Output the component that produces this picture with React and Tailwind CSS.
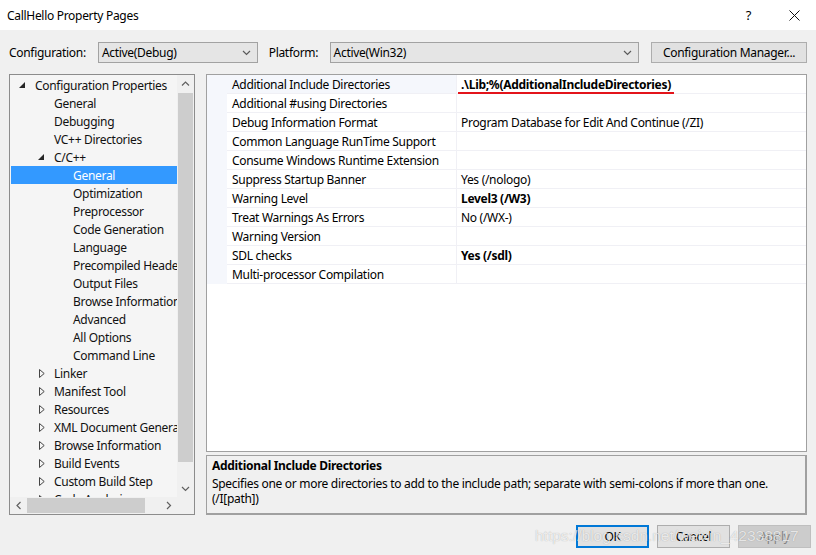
import React from 'react';

const font = "font-['Noto_Sans',sans-serif] tracking-[-0.3px]";

const treeItems = [
  { label: 'Configuration Properties', level: 0, tri: 'open' },
  { label: 'General', level: 1 },
  { label: 'Debugging', level: 1 },
  { label: 'VC++ Directories', level: 1 },
  { label: 'C/C++', level: 1, tri: 'open' },
  { label: 'General', level: 2, selected: true },
  { label: 'Optimization', level: 2 },
  { label: 'Preprocessor', level: 2 },
  { label: 'Code Generation', level: 2 },
  { label: 'Language', level: 2 },
  { label: 'Precompiled Headers', level: 2 },
  { label: 'Output Files', level: 2 },
  { label: 'Browse Information', level: 2 },
  { label: 'Advanced', level: 2 },
  { label: 'All Options', level: 2 },
  { label: 'Command Line', level: 2 },
  { label: 'Linker', level: 1, tri: 'closed' },
  { label: 'Manifest Tool', level: 1, tri: 'closed' },
  { label: 'Resources', level: 1, tri: 'closed' },
  { label: 'XML Document Generator', level: 1, tri: 'closed' },
  { label: 'Browse Information', level: 1, tri: 'closed' },
  { label: 'Build Events', level: 1, tri: 'closed' },
  { label: 'Custom Build Step', level: 1, tri: 'closed' },
  { label: 'Code Analysis', level: 1, tri: 'closed' },
];

const indent = { 0: 'pl-[7px]', 1: 'pl-[26px]', 2: 'pl-[45px]' };

const props = [
  { name: 'Additional Include Directories', value: '.\\Lib;%(AdditionalIncludeDirectories)', bold: true, selected: true, marked: true },
  { name: 'Additional #using Directories', value: '' },
  { name: 'Debug Information Format', value: 'Program Database for Edit And Continue (/ZI)' },
  { name: 'Common Language RunTime Support', value: '' },
  { name: 'Consume Windows Runtime Extension', value: '' },
  { name: 'Suppress Startup Banner', value: 'Yes (/nologo)' },
  { name: 'Warning Level', value: 'Level3 (/W3)', bold: true },
  { name: 'Treat Warnings As Errors', value: 'No (/WX-)' },
  { name: 'Warning Version', value: '' },
  { name: 'SDL checks', value: 'Yes (/sdl)', bold: true },
  { name: 'Multi-processor Compilation', value: '' },
];

const Chevron = ({ dir = 'down', className = '' }) => {
  const pts = {
    down: '1,1 4.5,4.5 8,1',
    up: '1,4.5 4.5,1 8,4.5',
    left: '4.5,1 1,4.5 4.5,8',
    right: '1,1 4.5,4.5 1,8',
  }[dir];
  const size = dir === 'up' || dir === 'down' ? { width: 9, height: 6 } : { width: 6, height: 9 };
  return (
    <svg {...size} viewBox={`0 0 ${size.width} ${size.height}`} className={className}>
      <polyline points={pts} fill="none" stroke="currentColor" strokeWidth="1.2" />
    </svg>
  );
};

const Combo = ({ value, width }) => (
  <div className={`flex h-[21px] ${width} items-center justify-between border border-[#a2a2a2] bg-[#e5e5e5] pl-[3px] pr-[6px]`}>
    <span>{value}</span>
    <Chevron className="text-[#5a5a5a]" />
  </div>
);

const Triangle = ({ type }) => {
  if (type === 'open') {
    return (
      <svg width="6" height="6" viewBox="0 0 6 6" className="ml-[2px]">
        <polygon points="6,0 6,6 0,6" fill="#262626" />
      </svg>
    );
  }
  if (type === 'closed') {
    return (
      <svg width="6" height="9" viewBox="0 0 6 9" className="ml-[3px]">
        <polygon points="0.5,0.5 5.2,4.5 0.5,8.5" fill="none" stroke="#444" strokeWidth="1" />
      </svg>
    );
  }
  return null;
};

const Tree = () => (
  <div className="flex h-[441px] w-[186px] flex-col border border-[#8c8c8c] bg-[#f5f5f5]">
    <div className="flex min-h-0 flex-1">
      <div className="min-w-0 flex-1 overflow-hidden pt-[1px]">
        {treeItems.map((item, i) => (
          <div
            key={i}
            className={`flex h-[18px] items-center whitespace-nowrap ${indent[item.level]} ${
              item.selected ? 'ml-[1px] bg-[#3399ff] text-white' : 'text-[#111]'
            }`}
          >
            <span className="flex w-[18px] shrink-0 items-center">
              <Triangle type={item.tri} />
            </span>
            <span className={item.selected ? '-ml-[1px]' : ''}>{item.label}</span>
          </div>
        ))}
      </div>
      <div className="flex w-[17px] shrink-0 flex-col bg-[#f0f0f0]">
        <div className="flex h-[17px] items-center justify-center text-[#606060]">
          <Chevron dir="up" />
        </div>
        <div className="mx-[1px] mt-[1px] h-[369px] bg-[#cdcdcd]" />
        <div className="flex-1" />
        <div className="flex h-[17px] items-center justify-center text-[#606060]">
          <Chevron dir="down" />
        </div>
      </div>
    </div>
    <div className="flex h-[17px] shrink-0 items-center bg-[#f0f0f0]">
      <div className="flex w-[17px] items-center justify-center text-[#606060]">
        <Chevron dir="left" />
      </div>
      <div className="my-[1px] h-[15px] w-[118px] bg-[#cdcdcd]" />
      <div className="flex-1" />
      <div className="flex w-[17px] items-center justify-center text-[#606060]">
        <Chevron dir="right" />
      </div>
      <div className="w-[17px]" />
    </div>
  </div>
);

const Grid = () => (
  <div className="h-[378px] border border-[#a0a0a0] bg-white">
    {props.map((p, i) => (
      <div key={i} className="flex h-[19px]">
        <div className="w-[20px] shrink-0 bg-[#f5f7fc]" />
        <div
          className={`flex w-[230px] shrink-0 items-center border-b border-r border-[#f0f0f5] pl-[5px] whitespace-nowrap ${
            p.selected ? 'bg-[#f5f7fc]' : ''
          }`}
        >
          {p.name}
        </div>
        <div className="flex flex-1 items-center border-b border-[#f0f0f5] pl-[4px] whitespace-nowrap">
          <span className={`relative ${p.bold ? 'font-bold' : ''}`}>
            {p.value}
            {p.marked && <span className="absolute -left-[3px] -right-[3px] -bottom-[2px] h-[2px] bg-[#e3141b]" />}
          </span>
        </div>
      </div>
    ))}
  </div>
);

const Button = ({ children, variant }) => {
  const styles = {
    default: 'border-2 border-[#0078d7] bg-[#e1e1e1] text-black',
    normal: 'border border-[#adadad] bg-[#e1e1e1] text-black',
    disabled: 'border border-[#bfbfbf] bg-[#cccccc] text-[#838383]',
  }[variant];
  return <div className={`flex h-[23px] w-[73px] items-center justify-center ${styles}`}>{children}</div>;
};

export default function App() {
  return (
    <div className={`relative h-[555px] w-[816px] overflow-hidden bg-[#f0f0f0] text-[12px] leading-[15px] text-black ${font}`}>
      {/* title bar */}
      <div className="flex h-[30px] items-center justify-between bg-white pl-[7px]">
        <span>CallHello Property Pages</span>
        <div className="flex items-center">
          <span className="mr-[38px] text-[13px]">?</span>
          <svg width="11" height="11" viewBox="0 0 11 11" className="mr-[16px]">
            <path d="M0.5 0.5 L10.5 10.5 M10.5 0.5 L0.5 10.5" stroke="#111" strokeWidth="1" />
          </svg>
        </div>
      </div>

      {/* configuration row */}
      <div className="mt-[12px] flex h-[21px] items-center px-[9px]">
        <span className="w-[89px]">Configuration:</span>
        <Combo value="Active(Debug)" width="w-[160px]" />
        <span className="ml-[11px] w-[61px]">Platform:</span>
        <Combo value="Active(Win32)" width="w-[310px]" />
        <div className="ml-[12px] flex h-[21px] w-[156px] items-center justify-center border border-[#adadad] bg-[#e1e1e1]">
          Configuration Manager...
        </div>
      </div>

      {/* main */}
      <div className="mt-[11px] flex gap-[11px] px-[9px]">
        <Tree />
        <div className="flex w-[602px] flex-col gap-[3px]">
          <Grid />
          <div className="h-[60px] border border-b-2 border-r-2 border-[#a0a0a0] bg-[#f0f0f0] pl-[5px] pt-[2px]">
            <div className="mb-[3px] font-bold">Additional Include Directories</div>
            <div>
              Specifies one or more directories to add to the include path; separate with semi-colons if more than one.
              <br />
              (/I[path])
            </div>
          </div>
        </div>
      </div>

      {/* buttons */}
      <div className="mt-[10px] flex justify-end gap-[8px] pr-[5px]">
        <Button variant="default">OK</Button>
        <Button variant="normal">Cancel</Button>
        <Button variant="disabled">Apply</Button>
      </div>

      {/* watermark */}
      <div className="pointer-events-none absolute left-[535px] top-[527px] font-['Liberation_Sans',sans-serif] text-[15.5px] leading-[18px] tracking-normal text-white/75 [text-shadow:0_0_1px_rgba(0,0,0,0.3)]">
        https://blog.csdn.net/weixin_42338817
      </div>
    </div>
  );
}
